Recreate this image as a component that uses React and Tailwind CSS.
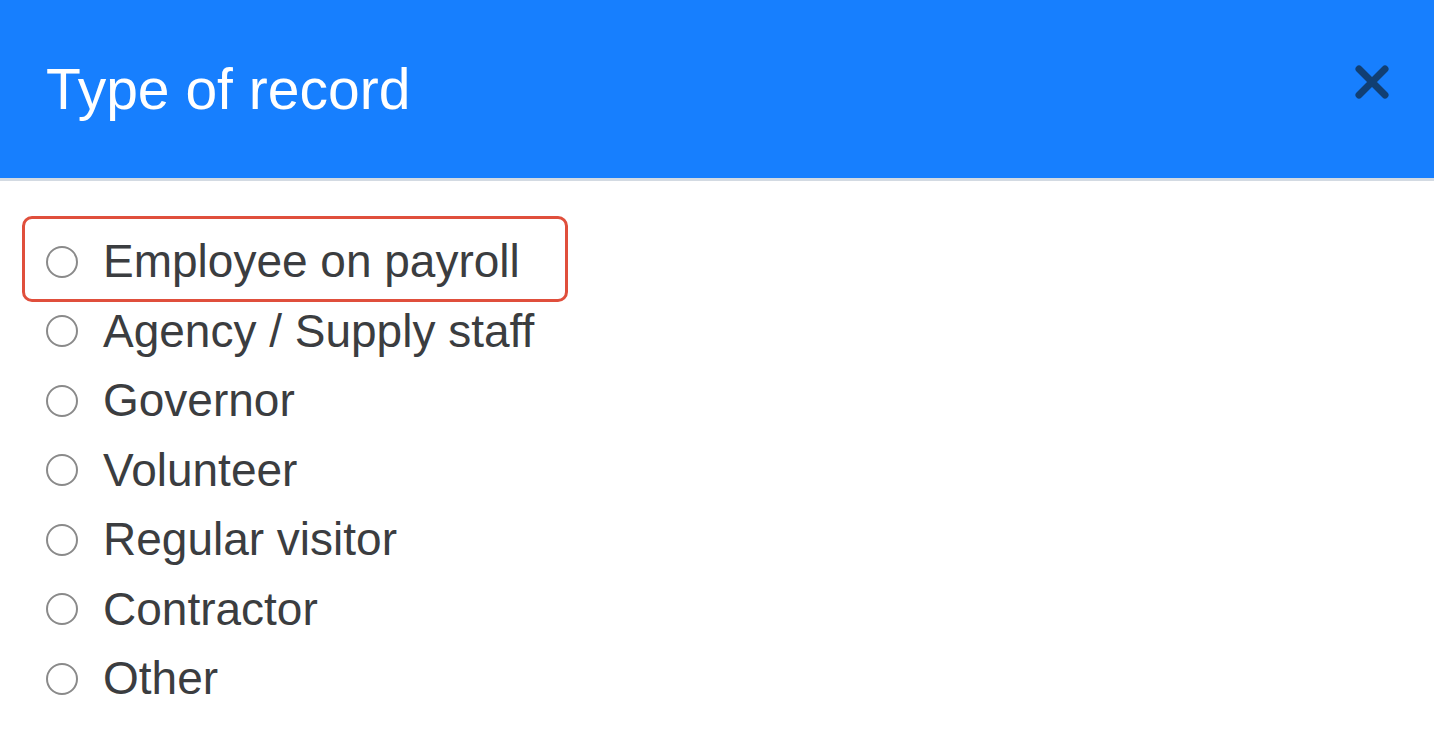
const OPTIONS = [
  'Employee on payroll',
  'Agency / Supply staff',
  'Governor',
  'Volunteer',
  'Regular visitor',
  'Contractor',
  'Other',
];

const Radio = () => (
  <span className="w-[32px] h-[32px] rounded-full border-2 border-[#8a8a8a] bg-white shrink-0" />
);

export default function App() {
  return (
    <div className="min-h-screen bg-white font-['Liberation_Sans',Arial,sans-serif]">
      {/* Header */}
      <div className="h-[181px] bg-[#177ffe] border-b-[3px] border-[#d3dae2] flex items-center justify-between pl-[46px] pr-[44px]">
        <h1 className="text-[57px] leading-[64px] text-white">Type of record</h1>
        <button className="mb-[14px] text-[#113f73]" aria-label="Close">
          <svg width="36" height="36" viewBox="0 0 36 36" fill="none">
            <path d="M5 5L31 31M31 5L5 31" stroke="currentColor" strokeWidth="7" strokeLinecap="round" />
          </svg>
        </button>
      </div>

      {/* Options */}
      <div className="pt-[46px] pl-[46px]">
        {OPTIONS.map((label, i) => (
          <label key={label} className="relative flex items-center gap-[25px] h-[69.5px] text-[46px] leading-[69px] text-[#3b3d40]">
            {i === 0 && (
              <span className="absolute -left-[24px] top-[-11px] w-[546px] h-[86px] border-[3px] border-[#e04f3c] rounded-[10px]" />
            )}
            <Radio />
            <span>{label}</span>
          </label>
        ))}
      </div>
    </div>
  );
}
